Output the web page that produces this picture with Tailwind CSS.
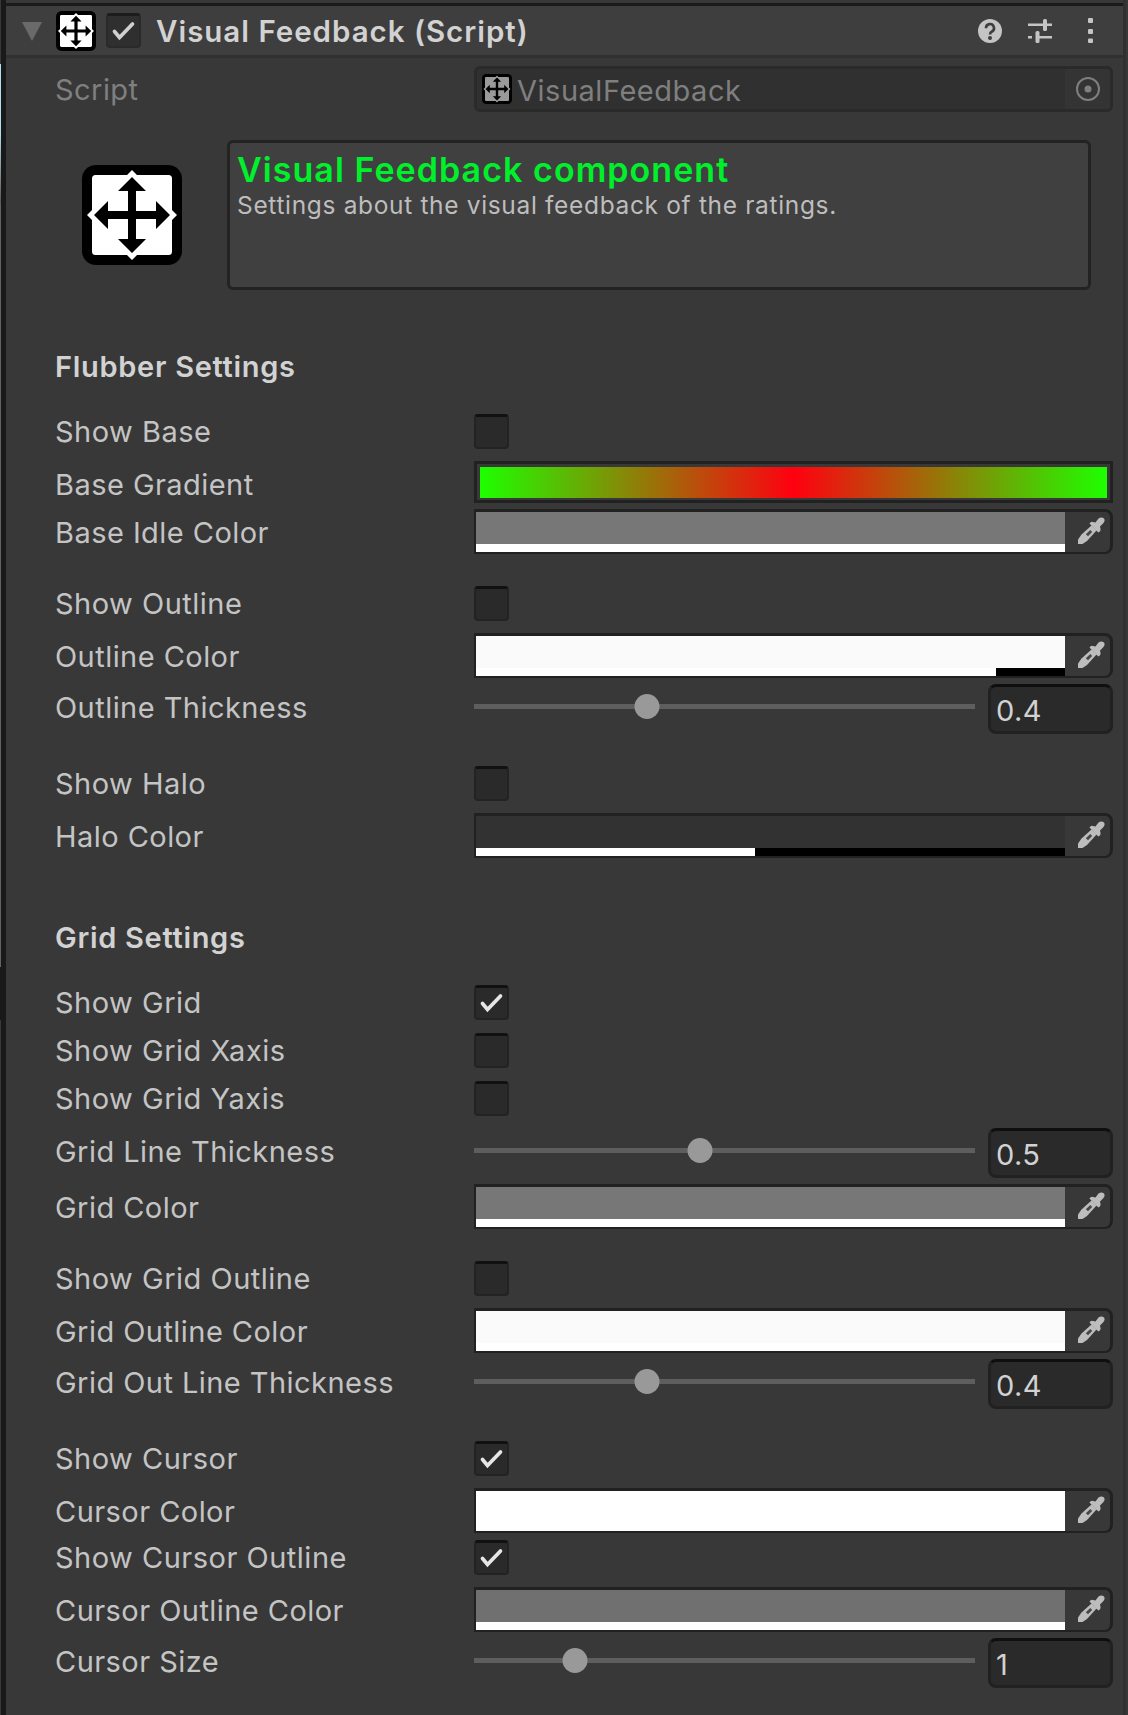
<!DOCTYPE html>
<html lang="en">
<head>
<meta charset="utf-8">
<title>Visual Feedback (Script)</title>
<script src="https://cdn.jsdelivr.net/npm/@tailwindcss/browser@4"></script>
</head>
<body class="bg-[#383838]">
<svg class="hidden">
  <symbol id="move" viewBox="0 0 100 100">
    <rect width="100" height="100" rx="14" fill="#000"/>
    <rect x="10" y="10" width="80" height="80" rx="3.500" fill="currentColor"/>
    <path d="M50 5l9 9H41zM50 95l9-9H41zM5 50l9-9v18zM95 50l-9-9v18z" fill="currentColor"/>
    <path d="M50 12L64 26H54V46H74V36L88 50L74 64V54H54V74H64L50 88L36 74H46V54H26V64L12 50L26 36V46H46V26H36z" fill="#000"/>
  </symbol>
  <symbol id="tick" viewBox="0 0 35 35">
    <path d="M8.500 18.500l5 6L26.500 11" fill="none" stroke="currentColor" stroke-width="3.700" stroke-linecap="round" stroke-linejoin="miter"/>
  </symbol>
  <symbol id="dropper" viewBox="0 0 27 27">
    <path d="M11.500 6.500Q13 4 15 5L17.500 5.500L20.500 1.500Q23.500-.5 26 1.500Q27.500 4 25 6.500L22 9.500L22.500 12Q23 14.500 20.500 15.500L17.500 13z" fill="#bdbdbd"/>
    <path d="M13.500 8.500L18.500 13.500L9 24L4.500 27H0V22.500L3.500 17.500z" fill="#bdbdbd"/>
    <path d="M12.300 13L14.200 14.900L10 19.300L7.800 17.200z" fill="#484848"/>
  </symbol>
</svg>
<div class="flex h-[1715px] w-[1128px] overflow-hidden bg-[#383838] font-['Inter',sans-serif] text-[29px] text-[#c4c4c4]">
  <div class="flex w-px shrink-0 flex-col">
    <div class="h-16 bg-[#383838]"></div>
    <div class="h-[70px] bg-[#b5dcec]"></div>
    <div class="h-[70px] bg-linear-to-b from-[#b5dcec] to-[#5a5654]"></div>
    <div class="h-[763px] bg-[#6b615c]"></div>
    <div class="h-[53px] bg-[#191919]"></div>
  </div>
  <div class="w-[5px] shrink-0 bg-[#191919]"></div>
  <main class="w-[1117px] shrink-0">
    <header class="mt-[3px] flex h-[55px] items-start border-t-[3px] border-b-[3px] border-t-[#1a1a1a] border-b-[#303030] bg-[#3e3e3e]">
      <svg class="mt-4 ml-4 h-[19px] w-5" viewBox="0 0 20 19"><path d="M0 0h20L10 19z" fill="#6a6a6a"/></svg>
      <svg class="mt-[5px] ml-[14px] size-10 text-white"><use href="#move"/></svg>
      <div class="mt-[7px] ml-[10px] size-[35px] rounded border-2 border-t-[3px] border-[#2a2a2a] border-t-[#1c1c1c] bg-[#2f2f2f]"><svg class="-mt-[3px] -ml-[2px] size-[35px] text-[#d0d0d0]"><use href="#tick"/></svg></div>
      <h1 class="ml-[15px] leading-[50px] font-semibold text-[29.5px] tracking-[0.98px] whitespace-nowrap text-[#d2d2d2]">Visual Feedback (Script)</h1>
      <div class="mr-[29px] ml-auto flex items-start pt-[13px]">
        <svg class="mr-[26px] size-6" viewBox="0 0 24 24"><circle cx="12" cy="12" r="12" fill="#c4c4c4"/><path d="M8 9.200a4 4 0 1 1 6 3.300c-1.500.9-2 1.400-2 3" fill="none" stroke="#3e3e3e" stroke-width="2.600"/><circle cx="12" cy="19" r="2" fill="#3e3e3e"/></svg>
        <svg class="mr-9 size-6" viewBox="0 0 24 24" fill="#c4c4c4"><path d="M0 4.500h15v2.500H0zM19 4.500h5v2.500h-5zM0 17h4v2.500H0zM9 17h15v2.500H9z"/><rect x="15" width="4" height="12" rx="1.500"/><rect x="7.500" y="12" width="4" height="12" rx="1.500"/></svg>
        <svg class="-mt-1 h-7 w-[6px]" viewBox="0 0 6 28" fill="#c4c4c4"><rect y="3" x="0" width="5" height="5" rx="1"/><rect y="14" x="0" width="5" height="5" rx="1"/><rect y="23.500" x="0" width="5" height="4.500" rx="1"/></svg>
      </div>
    </header>

    <section class="pr-[10px] pl-[49px]">
      <div class="mt-2 flex h-[46px] text-[#7f7f7f]">
        <div class="w-[419px] leading-[47px] tracking-[0.45px]">Script</div>
        <div class="flex flex-1 overflow-hidden rounded-md border-[3px] border-[#2a2a2a] bg-[#303030]">
          <svg class="mt-[5px] ml-[5px] size-[30px] text-[#9a9a9a]"><use href="#move"/></svg>
          <span class="ml-[5px] leading-[43px] tracking-[0.52px]">VisualFeedback</span>
          <div class="ml-auto flex w-[45px] justify-center bg-[#343434] pt-2"><svg class="size-6" viewBox="0 0 24 24"><circle cx="12" cy="12" r="11" fill="none" stroke="#7f7f7f" stroke-width="2"/><circle cx="12" cy="12" r="3.500" fill="#7f7f7f"/></svg></div>
        </div>
      </div>

      <div class="mt-7 flex">
        <svg class="mt-[25px] ml-[27px] size-[100px] text-white"><use href="#move"/></svg>
        <div class="ml-[45px] h-[150px] w-[864px] rounded-md border-[3px] border-[#232323] bg-[#404040] pt-[7px] pl-[7px]">
          <h2 class="text-[34px] leading-[40px] font-semibold tracking-[1.050px] text-[#00f02c]">Visual Feedback component</h2>
          <p class="text-[24.5px] leading-[30px] tracking-[0.66px] text-[#bdbdbd]">Settings about the visual feedback of the ratings.</p>
        </div>
      </div>
      <div id="rows" class="pt-px"></div>
    </section>
  </main>
  <div class="w-[3px] shrink-0 bg-[#303030]"></div>
</div>
<script>
const label = (t) => `<div class="w-[419px] leading-[47px] tracking-[0.45px] whitespace-nowrap">${t}</div>`;
const heading = (gap, t) => `<h3 class="${gap} h-[35px] leading-[35px] font-semibold tracking-[0.7px] text-[#d2d2d2]">${t}</h3>`;
const check = (gap, t, on) => `<div class="${gap} flex h-[35px]"><div class="w-[419px] leading-[35px] tracking-[0.5px] whitespace-nowrap">${t}</div>
  <div class="size-[35px] rounded border-2 border-t-[3px] border-[#232323] border-t-[#111] bg-[#2a2a2a]">${on ? '<svg class="-mt-[3px] -ml-[2px] size-[35px] text-[#e6e6e6]"><use href="#tick"/></svg>' : ''}</div></div>`;
const gradient = (gap, t) => `<div class="${gap} flex h-[42px]">${label(t)}
  <div class="flex-1 border-[3px] border-[#212121] px-[3px] pt-[3px] pb-[2px]"><div class="h-full bg-[linear-gradient(to_right,#1eff00,#ff0010_50%,#1eff00)]"></div></div></div>`;
const color = (gap, t, fill, alpha) => `<div class="${gap} flex h-[45px]">${label(t)}
  <div class="flex flex-1 rounded-r-lg border-2 border-t-[3px] border-r-[3px] border-[#212121]">
    <div class="flex w-[589px] flex-col"><div class="h-8 ${fill}"></div><div class="h-2 bg-black"><div class="h-full bg-white" style="width:${alpha}%"></div></div></div>
    <svg class="mt-[5px] ml-[13px] size-[27px]"><use href="#dropper"/></svg>
  </div></div>`;
const slider = (gap, t, pos, val) => `<div class="${gap} flex h-[50px]">${label(t)}
  <div class="relative mt-5 h-[5px] w-[501px] bg-[#5e5e5e]"><div class="absolute -top-[10px] size-[25px] -translate-x-1/2 rounded-full bg-[#999]" style="left:${pos}px"></div></div>
  <div class="ml-[13px] w-[125px] rounded-lg border-[3px] border-[#212121] border-t-[#0f0f0f] bg-[#2a2a2a] pl-[5px] leading-[48px] tracking-[0.4px] text-[#d2d2d2]">${val}</div></div>`;
document.getElementById('rows').innerHTML = [
  heading('mt-[58px]', 'Flubber Settings'),
  check('mt-[30px]', 'Show Base', false),
  gradient('mt-3', 'Base Gradient'),
  color('mt-[6px]', 'Base Idle Color', 'bg-[#777]', 100),
  check('mt-8', 'Show Outline', false),
  color('mt-3', 'Outline Color', 'bg-[#fafafa]', 88.3),
  slider('mt-[6px]', 'Outline Thickness', 172.5, '0.4'),
  check('mt-8', 'Show Halo', false),
  color('mt-3', 'Halo Color', 'bg-[#323232]', 47.3),
  heading('mt-[62px]', 'Grid Settings'),
  check('mt-[30px]', 'Show Grid', true),
  check('mt-[13px]', 'Show Grid Xaxis', false),
  check('mt-[13px]', 'Show Grid Yaxis', false),
  slider('mt-3', 'Grid Line Thickness', 225.5, '0.5'),
  color('mt-[6px]', 'Grid Color', 'bg-[#777]', 100),
  check('mt-8', 'Show Grid Outline', false),
  color('mt-3', 'Grid Outline Color', 'bg-[#fafafa]', 100),
  slider('mt-[6px]', 'Grid Out Line Thickness', 172.5, '0.4'),
  check('mt-8', 'Show Cursor', true),
  color('mt-3', 'Cursor Color', 'bg-white', 100),
  check('mt-[7px]', 'Show Cursor Outline', true),
  color('mt-3', 'Cursor Outline Color', 'bg-[#707070]', 100),
  slider('mt-[6px]', 'Cursor Size', 100.5, '1'),
].join('');
</script>
</body>
</html>
